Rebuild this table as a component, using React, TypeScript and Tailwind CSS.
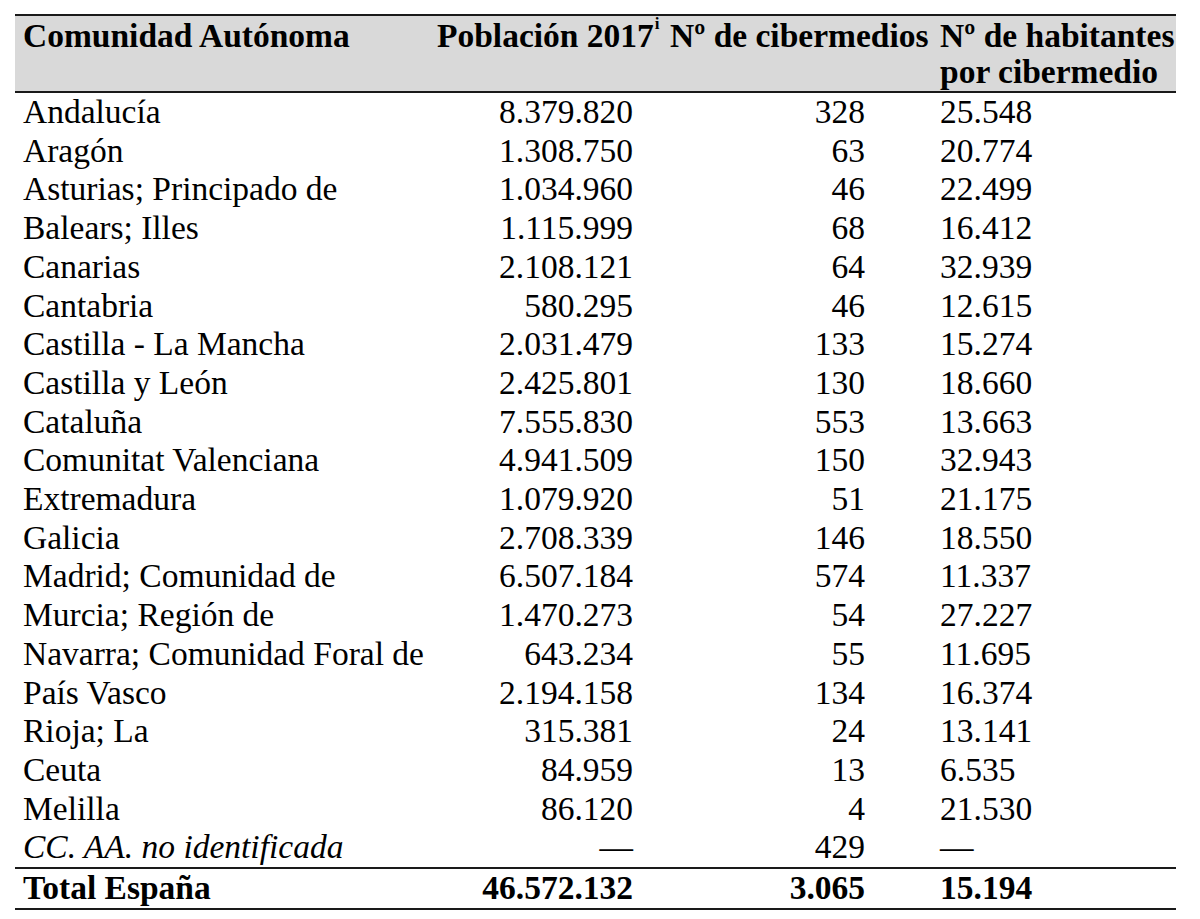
const rows: [string, string, string, string][] = [
  ['Andalucía', '8.379.820', '328', '25.548'],
  ['Aragón', '1.308.750', '63', '20.774'],
  ['Asturias; Principado de', '1.034.960', '46', '22.499'],
  ['Balears; Illes', '1.115.999', '68', '16.412'],
  ['Canarias', '2.108.121', '64', '32.939'],
  ['Cantabria', '580.295', '46', '12.615'],
  ['Castilla - La Mancha', '2.031.479', '133', '15.274'],
  ['Castilla y León', '2.425.801', '130', '18.660'],
  ['Cataluña', '7.555.830', '553', '13.663'],
  ['Comunitat Valenciana', '4.941.509', '150', '32.943'],
  ['Extremadura', '1.079.920', '51', '21.175'],
  ['Galicia', '2.708.339', '146', '18.550'],
  ['Madrid; Comunidad de', '6.507.184', '574', '11.337'],
  ['Murcia; Región de', '1.470.273', '54', '27.227'],
  ['Navarra; Comunidad Foral de', '643.234', '55', '11.695'],
  ['País Vasco', '2.194.158', '134', '16.374'],
  ['Rioja; La', '315.381', '24', '13.141'],
  ['Ceuta', '84.959', '13', '6.535'],
  ['Melilla', '86.120', '4', '21.530'],
];

const grid = 'grid grid-cols-[415px_238px_265px_243px]';

export default function App() {
  return (
    <div className="w-[1200px] h-[919px] bg-white text-black pt-[14px] pl-[15px] font-['Liberation_Serif','Times_New_Roman',serif]">
      <div className="w-[1161px] text-[33.5px] leading-[38.7px]">
        {/* header */}
        <div className={`${grid} border-t-2 border-b-2 border-[#1a1a1a] bg-[#d9d9d9] font-bold leading-[36px] pt-[2px] pb-[1px]`}>
          <div className="pl-[8px] whitespace-nowrap">Comunidad Autónoma</div>
          <div className="pl-[7px] whitespace-nowrap">
            Población 2017<sup className="text-[17px] font-bold relative top-[-18px] ml-[1px]">i</sup>
          </div>
          <div className="pl-[2px] whitespace-nowrap">Nº de cibermedios</div>
          <div className="pl-[7px] whitespace-nowrap">
            Nº de habitantes
            <br />
            por cibermedio
          </div>
        </div>

        {/* body */}
        {rows.map((r) => (
          <div key={r[0]} className={grid}>
            <div className="pl-[8px] whitespace-nowrap">{r[0]}</div>
            <div className="text-right pr-[35px]">{r[1]}</div>
            <div className="text-right pr-[68px]">{r[2]}</div>
            <div className="pl-[7px]">{r[3]}</div>
          </div>
        ))}
        <div className={`${grid} border-b-2 border-[#1a1a1a]`}>
          <div className="pl-[8px] italic whitespace-nowrap">CC. AA. no identificada</div>
          <div className="text-right pr-[35px]">—</div>
          <div className="text-right pr-[68px]">429</div>
          <div className="pl-[7px]">—</div>
        </div>

        {/* total */}
        <div className={`${grid} border-b-2 border-[#1a1a1a] font-bold`}>
          <div className="pl-[8px]">Total España</div>
          <div className="text-right pr-[35px]">46.572.132</div>
          <div className="text-right pr-[68px]">3.065</div>
          <div className="pl-[7px]">15.194</div>
        </div>
      </div>
    </div>
  );
}
